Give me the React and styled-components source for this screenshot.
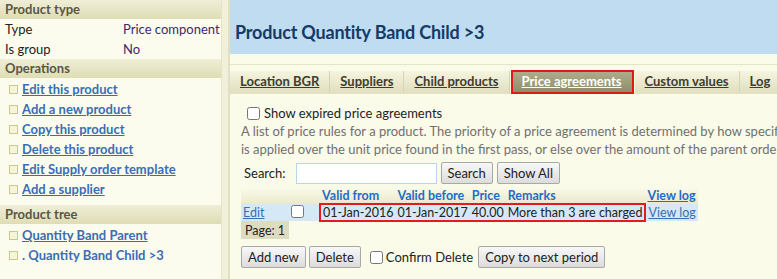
import styled, { createGlobalStyle } from "styled-components";

const GlobalStyle = createGlobalStyle`
  html, body {
    margin: 0;
    padding: 0;
    overflow: hidden;
    background: #fbfbea;
  }
  body {
    font-family: Lato, "Liberation Sans", sans-serif;
    font-size: 13px;
  }
`;

const sideLinks = [
  "Edit this product",
  "Add a new product",
  "Copy this product",
  "Delete this product",
  "Edit Supply order template",
  "Add a supplier",
];

const tabs = ["Location BGR", "Suppliers", "Child products", "Price agreements", "Custom values", "Log"];

const App = () => {
  return (
    <>
      <GlobalStyle />
      <Page>
        <Sidebar>
          <SectionHead>Product type</SectionHead>
          <PropTable>
            <span>Type</span><PropValue>Price component</PropValue>
            <span>Is group</span><PropValue>No</PropValue>
          </PropTable>
          <SectionHead>Operations</SectionHead>
          <LinkList>
            {sideLinks.map((l) => (
              <LinkItem key={l}><Bullet /><SideLink href="#">{l}</SideLink></LinkItem>
            ))}
          </LinkList>
          <SectionHead>Product tree</SectionHead>
          <LinkList>
            <LinkItem><Bullet /><SideLink href="#">Quantity Band Parent</SideLink></LinkItem>
            <LinkItem><Bullet /><SideLink as="span" $plain>. Quantity Band Child &gt;3</SideLink></LinkItem>
          </LinkList>
        </Sidebar>
        <Gutter />
        <Main>
          <TitleBar>Product Quantity Band Child &gt;3</TitleBar>
          <Spacer />
          <TabBar>
            {tabs.map((t) => (
              <Tab key={t} $active={t === "Price agreements"}>{t}</Tab>
            ))}
          </TabBar>
          <Content>
            <CheckRow>
              <Check type="checkbox" />
              <span>Show expired price agreements</span>
            </CheckRow>
            <Description>
              A list of price rules for a product. The priority of a price agreement is determined by how specific its filter is. The price
              <br />
              is applied over the unit price found in the first pass, or else over the amount of the parent order line.
            </Description>
            <SearchRow>
              <SearchLabel>Search:</SearchLabel>
              <SearchInput />
              <Button>Search</Button>
              <Button>Show All</Button>
            </SearchRow>
            <Grid>
              <thead>
                <tr>
                  <Th $w={41}></Th>
                  <Th $w={27}></Th>
                  <Th>Valid from</Th>
                  <Th>Valid before</Th>
                  <Th>Price</Th>
                  <Th>Remarks</Th>
                  <Th><HeadLink>View log</HeadLink></Th>
                </tr>
              </thead>
              <tbody>
                <DataRow>
                  <Td><RowLink href="#">Edit</RowLink></Td>
                  <Td><Check type="checkbox" /></Td>
                  <Td $boxed="left">01-Jan-2016</Td>
                  <Td $boxed="mid">01-Jan-2017</Td>
                  <Td $boxed="mid">40.00</Td>
                  <Td $boxed="right">More than 3 are charged</Td>
                  <Td><RowLink href="#">View log</RowLink></Td>
                </DataRow>
                <tr>
                  <PagerCell>Page: 1</PagerCell>
                </tr>
              </tbody>
            </Grid>
            <ButtonRow>
              <Button>Add new</Button>
              <Button>Delete</Button>
              <CheckLabel>
                <Check type="checkbox" />
                Confirm Delete
              </CheckLabel>
              <Button>Copy to next period</Button>
            </ButtonRow>
          </Content>
        </Main>
      </Page>
    </>
  );
};
export default App;

const Page = styled.div`
  display: flex;
  width: 1100px;
  height: 279px;
  background: #fbfbea;
`;

const Sidebar = styled.div`
  width: 221px;
  flex: none;
  background: #fcfcee;
  color: #222;
`;

const Gutter = styled.div`
  width: 6px;
  flex: none;
  background: #f1f0da;
  border-left: 1px solid #e6e4c6;
  border-right: 1px solid #e2e0c0;
`;

const SectionHead = styled.div`
  height: 19px;
  line-height: 19px;
  padding-left: 5px;
  font-weight: bold;
  font-size: 13px;
  color: #5c5644;
  background: linear-gradient(#efeed8, #deddb4);
`;

const PropTable = styled.div`
  display: grid;
  grid-template-columns: 118px 1fr;
  padding: 0 0 0 5px;
  line-height: 20px;
  font-size: 13px;
`;

const PropValue = styled.span`
  color: #3c2a6a;
`;

const LinkList = styled.div`
  display: flex;
  flex-direction: column;
  padding: 1px 0 6px 9px;
`;

const LinkItem = styled.div`
  display: flex;
  align-items: center;
  height: 20px;
  gap: 4px;
`;

const Bullet = styled.span`
  width: 7px;
  height: 7px;
  border: 1px solid #c9c892;
  background: #f6f5d6;
  flex: none;
`;

const SideLink = styled.a`
  color: #3a6db4;
  font-weight: bold;
  font-size: 13px;
  text-decoration: ${(p) => (p.$plain ? "none" : "underline")};
`;

const Main = styled.div`
  flex: 1;
  display: flex;
  flex-direction: column;
  border-left: 1px solid #e2e0c2;
`;

const TitleBar = styled.div`
  height: 54px;
  background: #bfdcf1;
  color: #153a68;
  font-weight: bold;
  font-size: 18px;
  letter-spacing: -0.2px;
  padding: 21px 0 0 5px;
  box-sizing: border-box;
`;

const Spacer = styled.div`
  height: 10px;
  border-bottom: 1px solid #e6e4c8;
  background: #fbfbea;
`;

const TabBar = styled.div`
  display: flex;
  margin-top: 5px;
  border-bottom: 1px solid #e4e2c4;
  height: 23px;
`;

const Tab = styled.div`
  padding: 0 10px;
  line-height: 20px;
  margin-top: 1px;
  font-weight: bold;
  font-size: 13px;
  text-decoration: underline;
  color: ${(p) => (p.$active ? "#ffffff" : "#3d3d2e")};
  background: ${(p) =>
    p.$active ? "linear-gradient(#aeae8c, #8c8c68)" : "linear-gradient(#f5f4df, #e1dfbe)"};
  border-right: 1px solid #d6d4b2;
  outline: ${(p) => (p.$active ? "2px solid #e01818" : "none")};
  outline-offset: -1px;
  margin-left: ${(p) => (p.$active ? "2px" : "0")};
  margin-right: ${(p) => (p.$active ? "2px" : "0")};
`;

const Content = styled.div`
  padding: 10px 0 0 11px;
  color: #222;
  font-size: 13px;
`;

const CheckRow = styled.label`
  display: flex;
  align-items: center;
  gap: 4px;
  margin-left: 6px;
  height: 18px;
`;

const Check = styled.input`
  width: 13px;
  height: 13px;
  margin: 0;
`;

const Description = styled.div`
  color: #707070;
  line-height: 18px;
  white-space: nowrap;
`;

const SearchRow = styled.div`
  display: flex;
  align-items: center;
  gap: 4px;
  margin-top: 4px;
`;

const SearchLabel = styled.span`
  margin: 0 6px 0 3px;
`;

const SearchInput = styled.input`
  box-sizing: border-box;
  width: 141px;
  height: 21px;
  border: 1px solid #b8d4f0;
  background: #fff;
`;

const Button = styled.button`
  font-family: inherit;
  font-size: 13px;
  color: #222;
  height: 22px;
  padding: 0 6px;
  border: 1px solid #a8a8a8;
  border-radius: 2px;
  background: linear-gradient(#f8f8f8, #dcdcdc);
`;

const Grid = styled.table`
  border-collapse: collapse;
  margin-top: 3px;
  font-size: 12.5px;
`;

const Th = styled.th`
  width: ${(p) => (p.$w ? `${p.$w}px` : "auto")};
  text-align: left;
  color: #1e6ccc;
  font-weight: bold;
  padding: 0 2px;
  height: 16px;
  background: linear-gradient(#fbfbea, #ebe9cc);
  white-space: nowrap;
`;

const HeadLink = styled.span`
  text-decoration: underline;
`;

const DataRow = styled.tr`
  background: #d5e8f6;
`;

const Td = styled.td`
  padding: 0 2px;
  height: 15px;
  white-space: nowrap;
  border-top: ${(p) => (p.$boxed ? "2px solid #e41b1b" : "none")};
  border-bottom: ${(p) => (p.$boxed ? "2px solid #e41b1b" : "none")};
  border-left: ${(p) => (p.$boxed === "left" ? "2px solid #e41b1b" : "none")};
  border-right: ${(p) => (p.$boxed === "right" ? "2px solid #e41b1b" : "none")};
`;

const RowLink = styled.a`
  color: #3a6db4;
`;

const PagerCell = styled.td`
  background: #dddbc0;
  padding: 0 4px;
  height: 18px;
  white-space: nowrap;
`;

const ButtonRow = styled.div`
  display: flex;
  align-items: center;
  gap: 3px;
  margin-top: 7px;
`;

const CheckLabel = styled.label`
  display: flex;
  align-items: center;
  gap: 3px;
  margin: 0 2px 0 6px;
`;
